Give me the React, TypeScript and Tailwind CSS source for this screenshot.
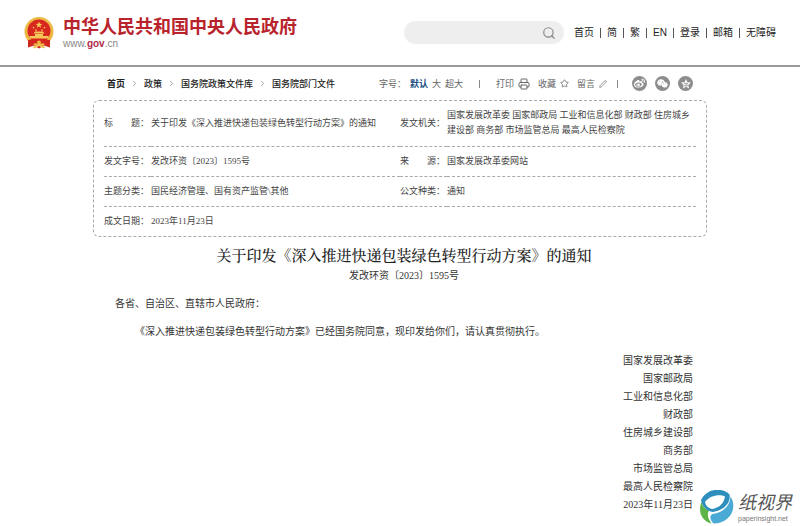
import { Fragment } from "react"
import { ChevronRight, Pen, Printer, Search, Star } from "lucide-react"
import { FaWeibo, FaWeixin } from "react-icons/fa"

const topLinks = ["首页", "简", "繁", "EN", "登录", "邮箱", "无障碍"]

const crumbs = ["首页", "政策", "国务院政策文件库", "国务院部门文件"]

const infoRows = [
  [
    "标　　题：",
    "关于印发《深入推进快递包装绿色转型行动方案》的通知",
    "发文机关：",
    "国家发展改革委 国家邮政局 工业和信息化部 财政部 住房城乡建设部 商务部 市场监管总局 最高人民检察院",
  ],
  ["发文字号：", "发改环资〔2023〕1595号", "来　　源：", "国家发展改革委网站"],
  ["主题分类：", "国民经济管理、国有资产监管\\其他", "公文种类：", "通知"],
  ["成文日期：", "2023年11月23日", "", ""],
]

const signers = [
  "国家发展改革委",
  "国家邮政局",
  "工业和信息化部",
  "财政部",
  "住房城乡建设部",
  "商务部",
  "市场监管总局",
  "最高人民检察院",
  "2023年11月23日",
]

function Emblem() {
  return (
    <svg viewBox="0 0 60 64" className="h-8 w-[30px] shrink-0" aria-hidden="true">
      <path d="M8 46 L8 61 L20 57 L30 63 L40 57 L52 61 L52 46 Z" fill="#d3261f" />
      <circle cx="30" cy="29" r="29" fill="#edb944" />
      <circle cx="30" cy="28" r="23" fill="#d8271e" />
      <path
        d="M30 9 l1.8 4.6 4.9.2-3.9 3 1.4 4.8-4.2-2.8-4.2 2.8 1.4-4.8-3.9-3 4.9-.2z"
        fill="#f4c95a"
      />
      <g fill="#f4c95a">
        <circle cx="19" cy="21" r="1.7" />
        <circle cx="24" cy="26" r="1.7" />
        <circle cx="36" cy="26" r="1.7" />
        <circle cx="41" cy="21" r="1.7" />
        <path d="M19 33 L22 29 H38 L41 33 Z" />
        <path d="M22 34 H38 V38 H49 V43 H11 V38 H22 Z" />
      </g>
      <path
        d="M8 46 Q20 43 30 49 Q40 43 52 46 L52 60 L43 57 L38 52 L30 55 L22 52 L17 57 L8 60 Z"
        fill="#d3261f"
      />
      <circle cx="30" cy="51" r="4" fill="#edb944" />
      <path d="M17 60 L30 54 L43 60 L39 63 L30 58 L21 63 Z" fill="#f1c65c" />
    </svg>
  )
}

function QzoneStar() {
  return (
    <svg viewBox="0 0 20 20" className="size-3" fill="none" aria-hidden="true">
      <path
        d="M10 1.8 l2.4 5.3 5.8.6-4.3 3.9 1.2 5.7-5.1-2.9-5.1 2.9 1.2-5.7-4.3-3.9 5.8-.6z"
        fill="#fff"
      />
      <path d="M6.5 9 H13 L7.5 13 H14" stroke="#8d8d8d" strokeWidth="1.3" />
    </svg>
  )
}

function Watermark() {
  return (
    <div className="absolute right-2 bottom-0.5 flex items-center gap-1">
      <svg viewBox="0 0 70 68" className="h-[34px] w-[35px]" aria-hidden="true">
        <path d="M5 24 C-3 44 6 62 25 67 C17 56 16 48 20 41 C12 38 7 32 5 24 Z" fill="#5db548" />
        <path
          d="M4 20 C16 -4 46 -6 61 9 C64 24 52 40 28 44 C14 42 6 32 4 20 Z"
          fill="#2e8fbd"
        />
        <path d="M63 13 C78 36 62 67 29 67 C21 58 21 52 27 48 C48 45 62 32 63 13 Z" fill="#4ba9d5" />
        <path d="M12 24 C22 10 42 8 52 13 C50 27 40 36 26 38 C18 36 13 31 12 24 Z" fill="#fff" />
      </svg>
      <div className="flex flex-col">
        <span className="font-['Liberation_Serif','Noto_Sans_CJK_SC',serif] text-[18px] leading-[24px] text-[#555] italic">
          纸视界
        </span>
        <span className="text-[7px] leading-[8px] text-[#777]">paperinsight.net</span>
      </div>
    </div>
  )
}

export default function App() {
  return (
    <div className="relative min-h-screen bg-white font-['Liberation_Sans','Noto_Sans_CJK_SC',sans-serif] text-[#333]">
      <header className="flex h-[67px] items-center justify-between border-b-2 border-[#999] px-6">
        <a href="#home" className="flex items-center gap-[9px]">
          <Emblem />
          <span className="flex flex-col">
            <span className="text-[18px] leading-[22px] font-bold text-[#b9232c]">
              中华人民共和国中央人民政府
            </span>
            <span className="text-[10px] leading-[12px] text-[#888]">
              www.<span className="font-bold text-[#b02a4a]">gov</span>.cn
            </span>
          </span>
        </a>
        <div className="flex items-center gap-[10px]">
          <form className="flex h-[23px] w-[160px] items-center rounded-full bg-[#eee] pr-2 pl-3">
            <input type="search" aria-label="搜索" className="w-full min-w-0 bg-transparent text-[10px] outline-none" />
            <button type="button" aria-label="搜索" className="text-[#888]">
              <Search size={14} strokeWidth={2} />
            </button>
          </form>
          <nav className="flex items-center gap-[6px] text-[10px] leading-4 text-[#222]">
            {topLinks.map((label, i) => (
              <Fragment key={label}>
                {i > 0 && <span className="h-[10px] w-px bg-[#555]" />}
                <a href="#top">{label}</a>
              </Fragment>
            ))}
          </nav>
        </div>
      </header>

      <main className="mx-auto max-w-[614px]">
        <div className="flex h-[33px] items-center justify-between px-[14px] text-[9px] leading-4">
          <nav className="flex items-center gap-[5px] text-[#222]">
            {crumbs.map((label, i) => (
              <Fragment key={label}>
                {i > 0 && <ChevronRight size={9} strokeWidth={2} className="text-[#888]" />}
                <a href="#crumb" className={i === 0 ? "font-bold" : "font-medium"}>
                  {label}
                </a>
              </Fragment>
            ))}
          </nav>
          <div className="flex items-center text-[#666]">
            <div className="flex items-center gap-1">
              <span>字号：</span>
              <button type="button" className="font-bold text-[#1d4f85]">默认</button>
              <button type="button">大</button>
              <button type="button">超大</button>
            </div>
            <span className="mx-4 h-2 w-px bg-[#888]" />
            <div className="flex items-center gap-2">
              <button type="button" className="flex items-center gap-1">
                打印 <Printer size={12} strokeWidth={2} />
              </button>
              <button type="button" className="flex items-center gap-1">
                收藏 <Star size={9} strokeWidth={2} />
              </button>
              <button type="button" className="flex items-center gap-1">
                留言 <Pen size={8} strokeWidth={2} />
              </button>
            </div>
            <span className="mr-[14px] ml-[10px] h-2 w-px bg-[#888]" />
            <div className="flex items-center gap-2">
              <a href="#weibo" aria-label="微博" className="flex size-[15px] items-center justify-center rounded-full bg-[#8d8d8d] text-white">
                <FaWeibo size={11} />
              </a>
              <a href="#weixin" aria-label="微信" className="flex size-[15px] items-center justify-center rounded-full bg-[#8d8d8d] text-white">
                <FaWeixin size={11} />
              </a>
              <a href="#qzone" aria-label="QQ空间" className="flex size-[15px] items-center justify-center rounded-full bg-[#8d8d8d] text-white">
                <QzoneStar />
              </a>
            </div>
          </div>
        </div>

        <section className="rounded-md border border-dashed border-[#aaa] px-[10px] font-['Liberation_Serif','Noto_Sans_CJK_SC',serif] text-[9px] leading-[15px] text-[#444]">
          <table className="w-full table-fixed border-collapse">
            <colgroup>
              <col className="w-[47px]" />
              <col />
              <col className="w-[47px]" />
              <col />
            </colgroup>
            <tbody>
              {infoRows.map(([label, value, label2, value2], i) => (
                <tr
                  key={label}
                  className={
                    i === 0
                      ? "h-[45px] border-b border-dashed border-[#aaa]"
                      : "h-[30px] border-b border-dashed border-[#aaa] last:border-b-0"
                  }
                >
                  <th scope="row" className="text-left font-normal whitespace-nowrap">{label}</th>
                  <td>{value}</td>
                  {label2 ? (
                    <>
                      <th scope="row" className="text-left font-normal whitespace-nowrap">{label2}</th>
                      <td>{value2}</td>
                    </>
                  ) : (
                    <td colSpan={2} />
                  )}
                </tr>
              ))}
            </tbody>
          </table>
        </section>

        <article className="pt-2 pr-[14px] pl-[22px] font-['Liberation_Serif','Noto_Sans_CJK_SC',serif] text-[10px] text-[#333]">
          <h1 className="text-center font-['Liberation_Serif','Noto_Serif_CJK_SC','Noto_Sans_CJK_SC',serif] text-[15px] leading-[22px] font-medium text-[#222]">
            关于印发《深入推进快递包装绿色转型行动方案》的通知
          </h1>
          <p className="text-center leading-[18px]">发改环资〔2023〕1595号</p>
          <div className="pt-[5px] leading-7">
            <p>各省、自治区、直辖市人民政府：</p>
            <p className="indent-[20px]">
              《深入推进快递包装绿色转型行动方案》已经国务院同意，现印发给你们，请认真贯彻执行。
            </p>
          </div>
          <div className="pt-[6px] text-right leading-[18px]">
            {signers.map((name) => (
              <p key={name}>{name}</p>
            ))}
          </div>
        </article>
      </main>

      <Watermark />
    </div>
  )
}
